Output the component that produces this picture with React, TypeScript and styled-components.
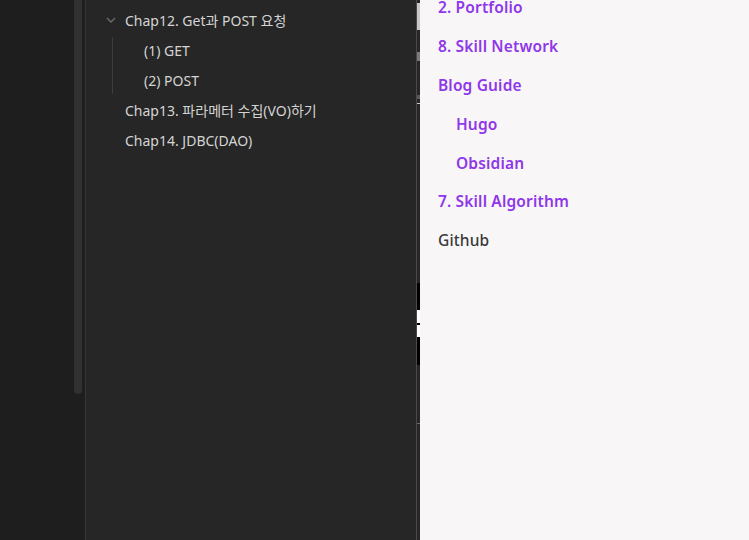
import React from "react";
import styled, { createGlobalStyle } from "styled-components";

const Global = createGlobalStyle`
  html, body { margin: 0; padding: 0; background: #1e1e1e; }
  body { overflow: hidden; }
`;

const Screen = styled.div`
  display: flex;
  width: 749px;
  height: 540px;
  overflow: hidden;
`;

const Rail = styled.div`
  width: 85px;
  flex: none;
  background: #1e1e1e;
  display: flex;
  justify-content: flex-end;
  border-right: 1px solid #363636;
`;

const Thumb = styled.div`
  width: 8px;
  height: 394px;
  margin-right: 3px;
  background: #313131;
  border-radius: 0 0 4px 4px;
`;

const TreePanel = styled.div`
  width: 331px;
  flex: none;
  background: #262626;
  border-right: 1px solid #4a4a4a;
  padding-top: 5px;
  box-sizing: border-box;
  font-family: "Noto Sans", "Noto Sans CJK KR", sans-serif;
  font-size: 14px;
  color: #d4d4d4;
`;

const Row = styled.div<{ $indent: number }>`
  height: 30px;
  display: flex;
  align-items: center;
  padding-left: ${(p) => p.$indent}px;
  white-space: nowrap;
`;

const Chevron = styled.svg`
  width: 12px;
  height: 12px;
  margin-right: 8px;
  margin-left: -20px;
`;

const Group = styled.div`
  position: relative;
`;

const Guide = styled.div`
  position: absolute;
  left: 26px;
  top: 2px;
  bottom: 1px;
  width: 1px;
  background: #3c3c3c;
`;

const Strip = styled.div`
  width: 3px;
  flex: none;
  background: #262626;
  display: flex;
  flex-direction: column;
`;

const Seg = styled.div<{ $h: number; $c: string }>`
  height: ${(p) => p.$h}px;
  background: ${(p) => p.$c};
  flex: none;
`;

const Outline = styled.div`
  flex: 1;
  background: #f9f6f8;
  padding-left: 18px;
  font-family: "Noto Sans", sans-serif;
  font-size: 15.5px;
  letter-spacing: 0.15px;
`;

const List = styled.div`
  margin-top: -12px;
`;

const Link = styled.div<{ $sub?: boolean; $plain?: boolean }>`
  height: 38.8px;
  display: flex;
  align-items: center;
  padding-left: ${(p) => (p.$sub ? 18 : 0)}px;
  color: ${(p) => (p.$plain ? "#3a3a3a" : "#8f37e9")};
  font-weight: ${(p) => (p.$plain ? 500 : 600)};
  white-space: nowrap;
`;

const segs: [number, string][] = [
  [3, "#262626"],
  [27, "#c8c8c8"],
  [22, "#262626"],
  [9, "#7a7a7a"],
  [34, "#262626"],
  [4, "#5a5a5a"],
  [4, "#262626"],
  [1, "#c8c8c8"],
  [179, "#262626"],
  [27, "#000000"],
  [13, "#ffffff"],
  [2, "#000000"],
  [12, "#ffffff"],
  [28, "#000000"],
  [58, "#262626"],
  [1, "#6a6a6a"],
];

export default function App() {
  return (
    <>
      <Global />
      <Screen>
        <Rail>
          <Thumb />
        </Rail>
        <TreePanel>
          <Row $indent={39}>
            <Chevron viewBox="0 0 12 12">
              <path d="M2 4 L6 8 L10 4" fill="none" stroke="#6e6e6e" strokeWidth="1.3" />
            </Chevron>
            Chap12. Get과 POST 요청
          </Row>
          <Group>
            <Guide />
            <Row $indent={58}>(1) GET</Row>
            <Row $indent={58}>(2) POST</Row>
          </Group>
          <Row $indent={39}>Chap13. 파라메터 수집(VO)하기</Row>
          <Row $indent={39}>Chap14. JDBC(DAO)</Row>
        </TreePanel>
        <Strip>
          {segs.map(([h, c], i) => (
            <Seg key={i} $h={h} $c={c} />
          ))}
        </Strip>
        <Outline>
          <List>
            <Link>2. Portfolio</Link>
            <Link>8. Skill Network</Link>
            <Link>Blog Guide</Link>
            <Link $sub>Hugo</Link>
            <Link $sub>Obsidian</Link>
            <Link>7. Skill Algorithm</Link>
            <Link $plain>Github</Link>
          </List>
        </Outline>
      </Screen>
    </>
  );
}
